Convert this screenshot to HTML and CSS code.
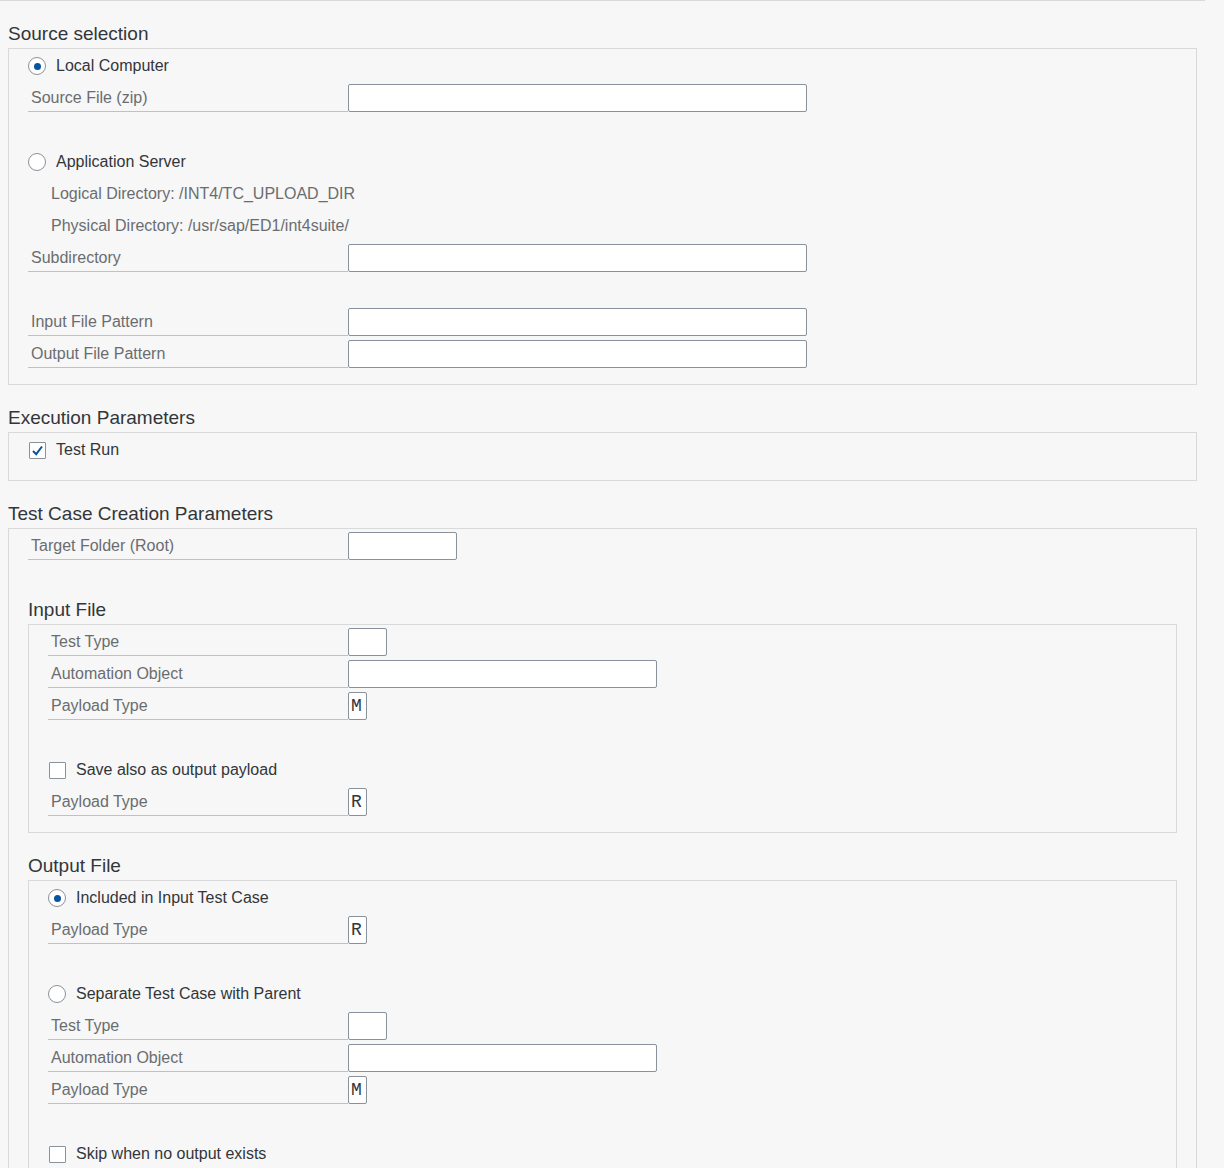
FILE: index.html
```html
<!DOCTYPE html>
<html lang="en">
<head>
    <meta charset="UTF-8">
    <title>Test Case Upload</title>
    <link rel="stylesheet" href="styles.css">
</head>
<body>
    <div class="page">
        <!-- Source selection -->
        <div class="group">
            <h2 class="group-title">Source selection</h2>
            <div class="group-box">
                <div class="row">
                    <span class="radio checked"></span>
                    <span class="option-text">Local Computer</span>
                </div>
                <div class="row">
                    <label class="field-label">Source File (zip)</label>
                    <input class="field-input w-long" type="text">
                </div>
                <div class="row"></div>
                <div class="row">
                    <span class="radio"></span>
                    <span class="option-text">Application Server</span>
                </div>
                <div class="row">
                    <span class="info-text">Logical Directory: /INT4/TC_UPLOAD_DIR</span>
                </div>
                <div class="row">
                    <span class="info-text">Physical Directory: /usr/sap/ED1/int4suite/</span>
                </div>
                <div class="row">
                    <label class="field-label">Subdirectory</label>
                    <input class="field-input w-long" type="text">
                </div>
                <div class="row"></div>
                <div class="row">
                    <label class="field-label">Input File Pattern</label>
                    <input class="field-input w-long" type="text">
                </div>
                <div class="row">
                    <label class="field-label">Output File Pattern</label>
                    <input class="field-input w-long" type="text">
                </div>
            </div>
        </div>

        <!-- Execution -->
        <div class="group">
            <h2 class="group-title">Execution Parameters</h2>
            <div class="group-box">
                <div class="row">
                    <span class="check checked">
                        <svg width="13" height="13" viewBox="0 0 13 13"><path d="M2 7 L5.2 10.2 L11 2.5" fill="none" stroke="#0854a0" stroke-width="2"/></svg>
                    </span>
                    <span class="option-text">Test Run</span>
                </div>
            </div>
        </div>

        <!-- Test case creation -->
        <div class="group">
            <h2 class="group-title">Test Case Creation Parameters</h2>
            <div class="group-box">
                <div class="row">
                    <label class="field-label">Target Folder (Root)</label>
                    <input class="field-input w-folder" type="text">
                </div>
                <div class="row short"></div>

                <div class="sub-group">
                    <h3 class="sub-title">Input File</h3>
                    <div class="group-box">
                        <div class="row">
                            <label class="field-label">Test Type</label>
                            <input class="field-input w-type" type="text">
                        </div>
                        <div class="row">
                            <label class="field-label">Automation Object</label>
                            <input class="field-input w-object" type="text">
                        </div>
                        <div class="row">
                            <label class="field-label">Payload Type</label>
                            <input class="field-input w-char" type="text" value="M">
                        </div>
                        <div class="row"></div>
                        <div class="row">
                            <span class="check"></span>
                            <span class="option-text">Save also as output payload</span>
                        </div>
                        <div class="row">
                            <label class="field-label">Payload Type</label>
                            <input class="field-input w-char" type="text" value="R">
                        </div>
                    </div>
                </div>

                <div class="sub-group">
                    <h3 class="sub-title">Output File</h3>
                    <div class="group-box">
                        <div class="row">
                            <span class="radio checked"></span>
                            <span class="option-text">Included in Input Test Case</span>
                        </div>
                        <div class="row">
                            <label class="field-label">Payload Type</label>
                            <input class="field-input w-char" type="text" value="R">
                        </div>
                        <div class="row"></div>
                        <div class="row">
                            <span class="radio"></span>
                            <span class="option-text">Separate Test Case with Parent</span>
                        </div>
                        <div class="row">
                            <label class="field-label">Test Type</label>
                            <input class="field-input w-type" type="text">
                        </div>
                        <div class="row">
                            <label class="field-label">Automation Object</label>
                            <input class="field-input w-object" type="text">
                        </div>
                        <div class="row">
                            <label class="field-label">Payload Type</label>
                            <input class="field-input w-char" type="text" value="M">
                        </div>
                        <div class="row"></div>
                        <div class="row">
                            <span class="check"></span>
                            <span class="option-text">Skip when no output exists</span>
                        </div>
                    </div>
                </div>
            </div>
        </div>
    </div>
</body>
</html>
```

FILE: styles.css
```css
html, body {
    margin: 0;
    padding: 0;
    overflow: hidden;
}
body {
    font-family: "Liberation Sans", Arial, sans-serif;
    font-size: 16px;
    color: #32363a;
    background-color: #f7f7f7;
}
.page {
    border-top: 1px solid #d9d9d9;
    padding: 0 8px;
    width: 1189px;
}
.group {
    margin-top: 15px;
}
.group-title, .sub-title {
    margin: 0;
    height: 32px;
    line-height: 36px;
    font-size: 19px;
    font-weight: normal;
    color: #32363a;
}
.group-box {
    border: 1px solid #d9d9d9;
    padding: 1px 19px 14px 19px;
}
.sub-group + .sub-group {
    margin-top: 15px;
}
.row {
    display: flex;
    align-items: center;
    height: 32px;
}
.row.short {
    height: 30px;
}
.field-label {
    box-sizing: border-box;
    width: 320px;
    height: 28px;
    margin-top: 2px;
    padding-left: 3px;
    line-height: 28px;
    border-bottom: 1px solid #bfc1c3;
    color: #6a6d70;
    align-self: flex-start;
}
.sub-group .field-label {
    width: 300px;
}
.field-input {
    box-sizing: border-box;
    height: 28px;
    margin: 2px 0 0 0;
    align-self: flex-start;
    border: 1px solid #89919a;
    border-radius: 2px;
    background: #fff;
    padding: 0 2px;
    font-family: "Liberation Mono", "DejaVu Sans Mono", monospace;
    font-size: 18px;
    color: #32363a;
    outline: none;
}
.w-long { width: 459px; }
.w-folder { width: 109px; }
.w-type { width: 39px; }
.w-object { width: 309px; }
.w-char { width: 19px; padding: 0 0 0 2px; }
.radio {
    box-sizing: border-box;
    width: 18px;
    height: 18px;
    border: 1px solid #89919a;
    border-radius: 50%;
    background: #fff;
    margin-right: 10px;
    display: flex;
    align-items: center;
    justify-content: center;
}
.radio.checked::after {
    content: "";
    width: 7px;
    height: 7px;
    border-radius: 50%;
    background: #0854a0;
}
.check {
    box-sizing: border-box;
    width: 17px;
    height: 17px;
    margin-left: 1px;
    margin-right: 10px;
    border: 1px solid #89919a;
    border-radius: 1px;
    background: #fff;
    display: flex;
    align-items: center;
    justify-content: center;
}
.option-text {
    color: #32363a;
}
.info-text {
    padding-left: 23px;
    color: #6a6d70;
}
```
